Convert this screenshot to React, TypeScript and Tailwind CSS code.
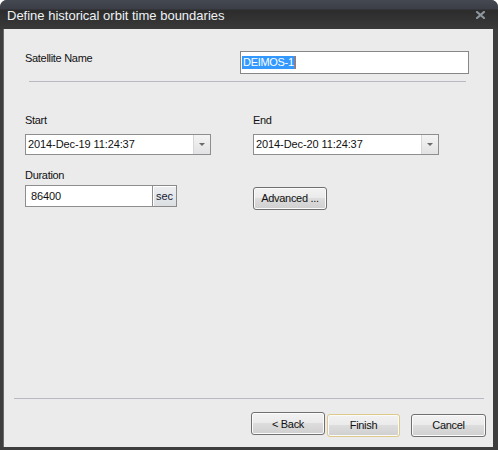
import type { ReactNode } from "react";

const font = { fontFamily: '"Liberation Sans", Arial, sans-serif' };

function Label({ children }: { children: ReactNode }) {
  return (
    <div className="h-[14px] text-[11px] leading-[14px] tracking-[-0.3px] text-[#111]">
      {children}
    </div>
  );
}

function Combo({ value }: { value: string }) {
  return (
    <div className="flex h-[21px] w-[186px] border border-[#8e8e8e] bg-white">
      <div className="flex-1 pl-[2px] text-[11px] leading-[19px] tracking-[-0.1px] text-[#111]">
        {value}
      </div>
      <div className="flex w-[17px] items-center justify-center border-l border-[#d6d6d6] bg-[linear-gradient(to_bottom,#f4f4f4,#e2e2e4)]">
        <div className="h-0 w-0 border-x-[3px] border-t-[3px] border-x-transparent border-t-[#6a6a6a]" />
      </div>
    </div>
  );
}

function Button({
  children,
  width,
  focused,
}: {
  children: ReactNode;
  width: string;
  focused?: boolean;
}) {
  return (
    <button
      type="button"
      className={
        "h-[23px] rounded-[3px] border text-[11px] tracking-[-0.3px] text-[#111] shadow-[inset_0_0_0_1px_#fbfbfb] bg-[linear-gradient(to_bottom,#f2f2f2_0%,#ebebeb_45%,#dddddd_50%,#cfcfcf_100%)] " +
        width +
        (focused ? " border-[#dfc98a]" : " border-[#707070]")
      }
    >
      {children}
    </button>
  );
}

export default function App() {
  return (
    <div
      style={font}
      className="flex h-[450px] w-[498px] flex-col overflow-hidden rounded-t-[7px] bg-[#3d3d3d]"
    >
      {/* title bar */}
      <div className="flex h-[29px] shrink-0 items-center justify-between bg-[linear-gradient(to_bottom,#454952_0px,#3b3e46_9px,#2c2c2d_10px,#393939_29px)] pl-[7px] pr-[13px]">
        <span className="pt-[2px] text-[13px] text-[#eef2f6]">
          Define historical orbit time boundaries
        </span>
        <svg width="9" height="8" viewBox="0 0 9 8" className="mt-[1px]">
          <path
            d="M1 1 L8 7 M8 1 L1 7"
            stroke="#8d959d"
            strokeWidth="2.2"
            strokeLinecap="square"
          />
        </svg>
      </div>

      {/* body */}
      <div className="mb-[3px] ml-[3px] mr-[5px] flex flex-1 flex-col border-l border-[#6a6a6a] bg-[#ebebeb]">
        <div className="flex items-start pl-[21px] pt-[22px]">
          <div className="w-[215px]">
            <Label>Satellite Name</Label>
          </div>
          <div className="flex h-[23px] w-[229px] items-center border border-[#878787] bg-white pl-[1px]">
            <span className="bg-[#3399ff] px-[1px] text-[11px] leading-[13px] tracking-[-0.3px] text-white">
              DEIMOS-1
            </span>
            <span className="h-[13px] w-[1px] bg-[#e06a1a]" />
          </div>
        </div>

        <div className="ml-[25px] mt-[7px] h-px w-[437px] bg-[#b9b9c3]" />

        <div className="mt-[31px] grid grid-cols-[228px_1fr] pl-[21px]">
          <div className="flex flex-col">
            <Label>Start</Label>
            <div className="mt-[7px]">
              <Combo value="2014-Dec-19 11:24:37" />
            </div>
            <div className="mt-[13px]">
              <Label>Duration</Label>
            </div>
            <div className="mt-[3px] flex h-[22px] w-[152px]">
              <div className="flex-1 border border-[#8e8e8e] bg-white pl-[5px] text-[11px] leading-[20px] tracking-[-0.1px] text-[#111]">
                86400
              </div>
              <div className="flex w-[24px] items-center justify-center border border-l-0 border-[#8a8a8a] bg-[linear-gradient(to_bottom,#eceef0,#dcdfe2)] text-[11px] text-[#141a36] shadow-[inset_1px_1px_0_#ffffff]">
                sec
              </div>
            </div>
          </div>
          <div className="flex flex-col">
            <Label>End</Label>
            <div className="mt-[7px]">
              <Combo value="2014-Dec-20 11:24:37" />
            </div>
            <div className="mt-[30px]">
              <Button width="w-[74px]">Advanced ...</Button>
            </div>
          </div>
        </div>

        <div className="mt-auto ml-[10px] h-px w-[470px] bg-[#b9b9c3]" />

        <div className="mt-[13px] mb-[10px] flex justify-end pr-[7px]">
          <Button width="w-[74px]">&lt; Back</Button>
          <div className="ml-[2px]">
            <Button width="w-[73px]" focused>
              Finish
            </Button>
          </div>
          <div className="ml-[11px]">
            <Button width="w-[75px]">Cancel</Button>
          </div>
        </div>
      </div>
    </div>
  );
}
